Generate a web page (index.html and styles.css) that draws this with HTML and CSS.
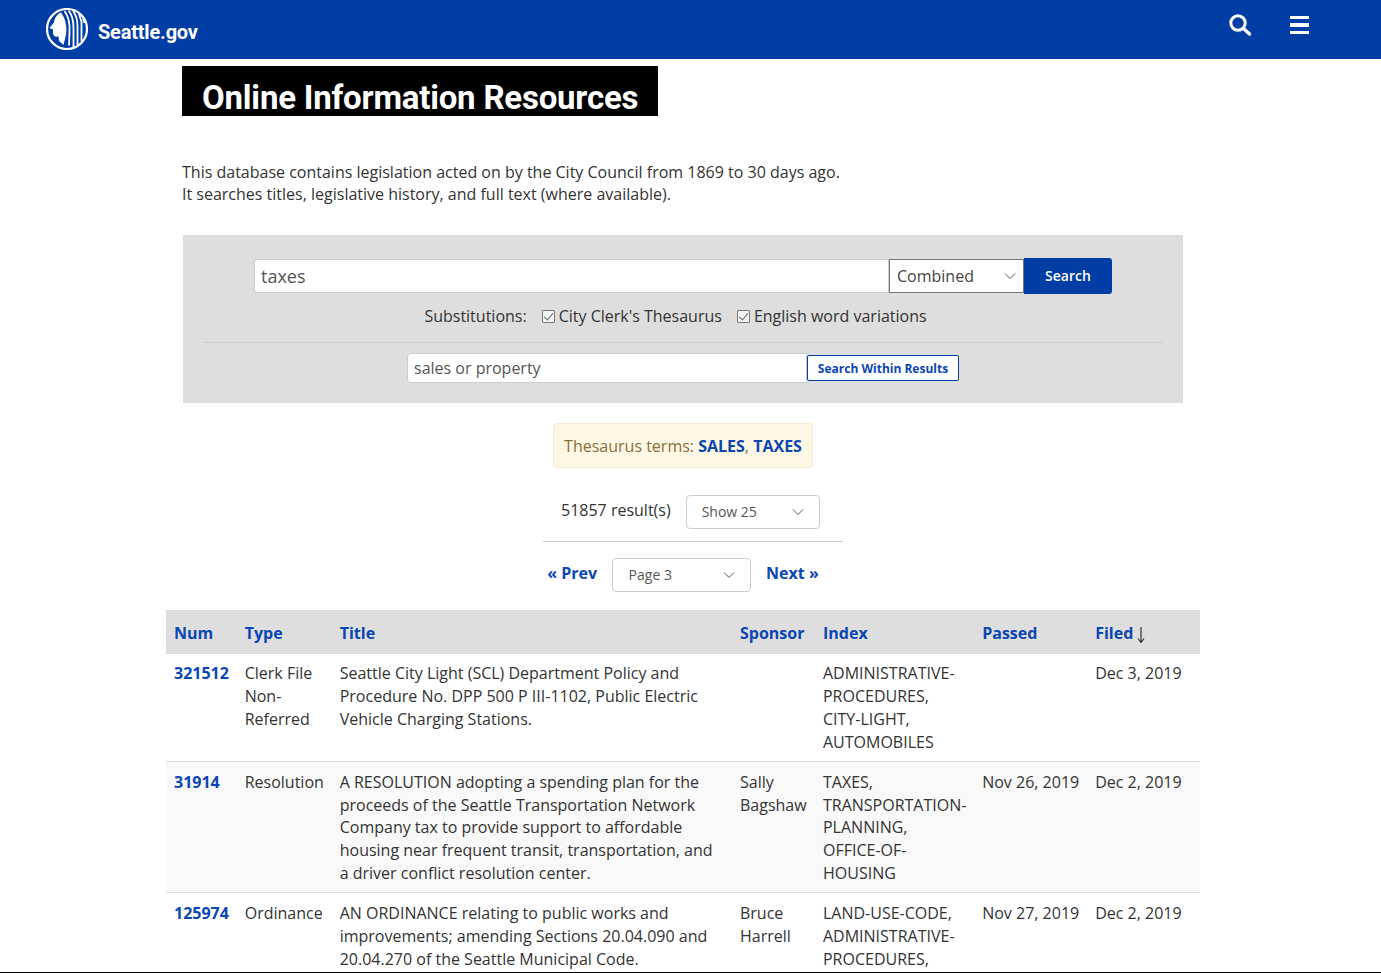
FILE: index.html
```html
<!DOCTYPE html>
<html lang="en">
<head>
  <meta charset="UTF-8">
  <meta name="viewport" content="width=device-width, initial-scale=1.0">
  <title>Online Information Resources</title>
  <link rel="stylesheet" href="styles.css">
</head>
<body>
  <div class="page">
    <header class="site-header">
      <a class="brand" href="#">
        <svg class="brand-logo" viewBox="0 0 42 42" width="42" height="42">
          <circle cx="21" cy="21" r="20" fill="none" stroke="#fff" stroke-width="2.2"/>
          <path fill="#fff" d="M15 4.5C10.5 6.5 8.5 10.5 8 14.5L3.5 20 7 21.5 7 25.5C7.5 28.5 10 29 12.5 28.5L13 33 17.5 37 19.5 29C21.5 23 20.5 11 15 4.5Z"/>
          <path fill="none" stroke="#fff" stroke-width="1.8" d="M18.5 3C23 9 24 16 23.5 24L23 37.5M22.5 2.5C27 8 27.5 14 27.5 20L27.5 39M27 3C31 8 31.5 13 31.5 18L31.5 37"/>
          <path fill="none" stroke="#fff" stroke-width="1.8" d="M33 6L35.5 14 35.5 33M37 11L38.5 15"/>
        </svg>
        <span class="brand-name">Seattle.gov</span>
      </a>
      <div class="header-icons">
        <svg class="icon-search" viewBox="0 0 24 24" width="24" height="24">
          <circle cx="10" cy="10" r="7.2" fill="none" stroke="#fff" stroke-width="3"/>
          <path d="M15.5 15.5L21.5 21" fill="none" stroke="#fff" stroke-width="3.4" stroke-linecap="round"/>
        </svg>
        <div class="icon-menu"><span></span><span></span><span></span></div>
      </div>
    </header>

    <main class="content">
      <h1 class="page-title">Online Information Resources</h1>
      <p class="intro">This database contains legislation acted on by the City Council from 1869 to 30 days ago.<br>It searches titles, legislative history, and full text (where available).</p>

      <section class="search-panel">
        <div class="search-row">
          <input class="search-input" type="text" value="taxes">
          <div class="search-field">
            <span class="select-text">Combined</span>
            <svg class="chevron" viewBox="0 0 12 8" width="12" height="8"><path d="M1 1.5L6 6.5 11 1.5" fill="none" stroke="#555" stroke-width="1"/></svg>
          </div>
          <button class="search-btn">Search</button>
        </div>
        <div class="subs-row">
          <span class="subs-label">Substitutions:</span>
          <label class="check"><input type="checkbox" checked>City Clerk's Thesaurus</label>
          <label class="check"><input type="checkbox" checked>English word variations</label>
        </div>
        <div class="within-row">
          <input class="within-input" type="text" value="sales or property">
          <button class="within-btn">Search Within Results</button>
        </div>
      </section>

      <div class="terms-wrap">
        <div class="terms">Thesaurus terms: <a href="#">SALES</a>, <a href="#">TAXES</a></div>
      </div>

      <div class="results-row">
        <span class="results-count">51857 result(s)</span>
        <div class="select select-show">
          <span class="select-text">Show 25</span>
          <svg class="chevron" viewBox="0 0 12 8" width="12" height="8"><path d="M1 1.5L6 6.5 11 1.5" fill="none" stroke="#555" stroke-width="1"/></svg>
        </div>
      </div>
      <div class="pager">
        <a href="#">« Prev</a>
        <div class="select select-page">
          <span class="select-text">Page 3</span>
          <svg class="chevron" viewBox="0 0 12 8" width="12" height="8"><path d="M1 1.5L6 6.5 11 1.5" fill="none" stroke="#555" stroke-width="1"/></svg>
        </div>
        <a href="#">Next »</a>
      </div>

      <table class="results">
        <thead>
          <tr>
            <th class="col-num"><a href="#">Num</a></th>
            <th class="col-type"><a href="#">Type</a></th>
            <th class="col-title"><a href="#">Title</a></th>
            <th class="col-sponsor"><a href="#">Sponsor</a></th>
            <th class="col-index"><a href="#">Index</a></th>
            <th class="col-passed"><a href="#">Passed</a></th>
            <th class="col-filed">
              <a href="#">Filed</a>
              <svg class="sort-arrow" viewBox="0 0 8 16" width="8" height="16"><path d="M4 0V15M1 11.5L4 15.5 7 11.5" fill="none" stroke="#333" stroke-width="1.2"/></svg>
            </th>
          </tr>
        </thead>
        <tbody>
          <tr>
            <td><a href="#">321512</a></td>
            <td>Clerk File Non-Referred</td>
            <td>Seattle City Light (SCL) Department Policy and Procedure No. DPP 500 P III-1102, Public Electric Vehicle Charging Stations.</td>
            <td></td>
            <td>ADMINISTRATIVE-PROCEDURES,<br>CITY-LIGHT,<br>AUTOMOBILES</td>
            <td></td>
            <td>Dec 3, 2019</td>
          </tr>
          <tr class="odd">
            <td><a href="#">31914</a></td>
            <td>Resolution</td>
            <td>A RESOLUTION adopting a spending plan for the proceeds of the Seattle Transportation Network Company tax to provide support to affordable housing near frequent transit, transportation, and a driver conflict resolution center.</td>
            <td>Sally Bagshaw</td>
            <td>TAXES,<br>TRANSPORTATION-PLANNING,<br>OFFICE-OF-HOUSING</td>
            <td>Nov 26, 2019</td>
            <td>Dec 2, 2019</td>
          </tr>
          <tr>
            <td><a href="#">125974</a></td>
            <td>Ordinance</td>
            <td>AN ORDINANCE relating to public works and improvements; amending Sections 20.04.090 and 20.04.270 of the Seattle Municipal Code.</td>
            <td>Bruce Harrell</td>
            <td>LAND-USE-CODE,<br>ADMINISTRATIVE-PROCEDURES,</td>
            <td>Nov 27, 2019</td>
            <td>Dec 2, 2019</td>
          </tr>
        </tbody>
      </table>
    </main>
  </div>
</body>
</html>
```

FILE: styles.css
```css
* {
  box-sizing: border-box;
}

html, body {
  margin: 0;
  padding: 0;
  background: #fff;
}

body {
  font-family: "Open Sans", sans-serif;
  font-size: 16px;
  line-height: 1.42857;
  color: #333;
}

a {
  color: #0a46b4;
  font-weight: 700;
  text-decoration: none;
}

.page {
  height: 973px;
  overflow: hidden;
  border-bottom: 1px solid #000;
}

/* top bar */
.site-header {
  height: 59px;
  background: #003da5;
  display: flex;
  justify-content: space-between;
  align-items: flex-start;
  padding: 8px 72px 0 46px;
}

.brand {
  display: flex;
  align-items: center;
  gap: 10px;
  color: #fff;
}

.brand-name {
  font-family: Roboto, sans-serif;
  font-size: 20px;
  font-weight: 700;
  letter-spacing: -0.2px;
  padding-top: 6px;
}

.header-icons {
  display: flex;
  align-items: center;
  gap: 38px;
  padding-top: 5px;
}

.icon-menu {
  display: flex;
  flex-direction: column;
  gap: 4px;
  width: 19px;
}

.icon-menu span {
  height: 3.5px;
  background: #fff;
}

/* main column */
.content {
  width: 1034px;
  margin-left: 166px;
}

.page-title {
  display: inline-block;
  margin: 7px 0 0 16px;
  height: 50px;
  padding: 13px 20px 0;
  background: #000;
  color: #fff;
  font-family: Roboto, sans-serif;
  font-size: 33px;
  line-height: 38px;
  font-weight: 700;
  letter-spacing: -0.21px;
  vertical-align: top;
}

.intro {
  margin: 44.6px 0 28.7px 16px;
}

/* search box */
.search-panel {
  width: 1000px;
  height: 168px;
  margin-left: 17px;
  padding: 23px 20px 0;
  background: #dedede;
}

.search-row {
  display: flex;
  justify-content: center;
  align-items: center;
  height: 36px;
}

.search-input {
  width: 635px;
  height: 34px;
  padding: 0 6px;
  border: 1px solid #ccc;
  border-radius: 4px 0 0 4px;
  font: 18px "Open Sans", sans-serif;
  color: #555;
}

.search-field {
  width: 135px;
  height: 34px;
  padding: 0 7px;
  display: flex;
  justify-content: space-between;
  align-items: center;
  background: #fff;
  border: 1px solid #767676;
  color: #444;
}

.search-field .select-text {
  padding-top: 1px;
}

.search-btn {
  width: 88px;
  height: 36px;
  border: none;
  border-radius: 0 3px 3px 0;
  background: #003da5;
  color: #fff;
  font: 600 14px "Open Sans", sans-serif;
}

.subs-row {
  display: flex;
  justify-content: center;
  align-items: center;
  gap: 15px;
  height: 49px;
  padding: 0 15px 3px 0;
  border-bottom: 1px solid #ccc;
}

.check {
  display: flex;
  align-items: center;
  gap: 4px;
}

.check input {
  appearance: none;
  position: relative;
  width: 13px;
  height: 13px;
  margin: 0;
  background: #f4f4f4;
  border: 1px solid #777;
  border-radius: 1px;
}

.check input::after {
  content: "";
  position: absolute;
  left: 3px;
  top: 0;
  width: 4px;
  height: 8px;
  border: solid #666;
  border-width: 0 1px 1px 0;
  transform: rotate(40deg);
}

.within-row {
  display: flex;
  justify-content: center;
  align-items: center;
  margin-top: 10px;
  height: 30px;
}

.within-input {
  width: 400px;
  height: 30px;
  padding: 0 6px;
  border: 1px solid #ccc;
  border-radius: 4px 0 0 4px;
  font: 16px "Open Sans", sans-serif;
  color: #555;
}

.within-btn {
  width: 152px;
  height: 26px;
  padding: 1px 0 0;
  background: #fff;
  border: 1px solid #003da5;
  border-radius: 2px;
  color: #0a46b4;
  font: 700 12px "Open Sans", sans-serif;
}

/* thesaurus note */
.terms-wrap {
  display: flex;
  justify-content: center;
  margin-top: 20px;
}

.terms {
  width: 260px;
  height: 45px;
  padding: 11px 10px 0;
  text-align: center;
  white-space: nowrap;
  background: #fcf8e3;
  border: 1px solid #faebcc;
  border-radius: 4px;
  color: #8a6d3b;
}

/* result count and paging */
.results-row {
  width: 300px;
  height: 47px;
  margin: 27px 0 0 377px;
  padding-left: 18px;
  display: flex;
  align-items: flex-start;
  gap: 15px;
  border-bottom: 1px solid #ccc;
}

.results-count {
  margin-top: 4px;
}

.select {
  height: 34px;
  display: flex;
  justify-content: space-between;
  align-items: center;
  background: #fff;
  border: 1px solid #ccc;
  border-radius: 4px;
  font-size: 14px;
  color: #555;
}

.select .select-text {
  padding-top: 1px;
}

.select-show {
  width: 134px;
  padding: 0 15px;
}

.select-page {
  width: 139px;
  padding: 0 15px 0 15.5px;
}

.pager {
  display: flex;
  justify-content: center;
  align-items: center;
  gap: 15px;
  margin-top: 16px;
  height: 34px;
}

.pager a {
  margin-top: -3px;
}

/* results table */
.results {
  width: 1034px;
  margin-top: 18.34px;
  border-collapse: collapse;
  table-layout: fixed;
}

.results th {
  height: 44px;
  padding: 10px 8px 8px;
  text-align: left;
  vertical-align: middle;
  background: #dedede;
  white-space: nowrap;
}

.results td {
  padding: 9px 8px 8px;
  vertical-align: top;
  box-shadow: 0 -1px 0 #ddd;
}

.results tbody tr:first-child td {
  padding-top: 8px;
  box-shadow: none;
}

.results tr.odd td {
  background: #f9f9f9;
}

.col-num { width: 70.7px; }
.col-type { width: 95px; }
.col-title { width: 400.3px; }
.col-sponsor { width: 83px; }
.col-index { width: 159.2px; }
.col-passed { width: 113px; }
.col-filed { width: 112.8px; }

.sort-arrow {
  vertical-align: -4px;
}
```
